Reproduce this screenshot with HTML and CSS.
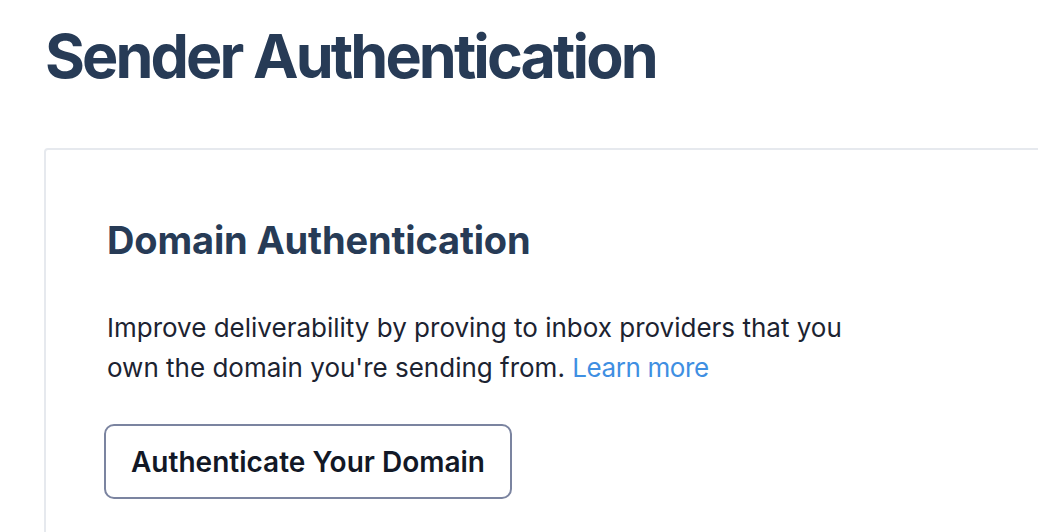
FILE: index.html
```html
<!DOCTYPE html>
<html lang="en">
<head>
<meta charset="utf-8">
<title>Sender Authentication</title>
<link rel="stylesheet" href="styles.css">
</head>
<body>
<main class="page">
  <h1 class="page-title">Sender Authentication</h1>
  <section class="card">
    <h2 class="card-title">Domain Authentication</h2>
    <p class="card-text">Improve deliverability by proving to inbox providers that you own the domain you're sending from. <a class="link" href="#">Learn more</a></p>
    <button class="btn" type="button">Authenticate Your Domain</button>
  </section>
</main>
</body>
</html>
```

FILE: styles.css
```css
html, body {
  margin: 0;
  padding: 0;
  background: #ffffff;
  overflow: hidden;
}
body {
  font-family: Inter, "Noto Sans", sans-serif;
}
.page {
  padding: 18px 0 0 44px;
  width: 1100px;
}
.page-title {
  margin: 0;
  font-size: 61px;
  line-height: 76px;
  font-weight: 700;
  color: #273b56;
  letter-spacing: -2.9px;
  padding-left: 1px;
}
.card {
  margin-top: 54px;
  border: 2px solid #e6e9ee;
  border-radius: 4px;
  padding: 66px 0 40px 61px;
}
.card-title {
  margin: 0;
  font-size: 38px;
  line-height: 48px;
  font-weight: 700;
  color: #273b56;
  letter-spacing: -0.15px;
}
.card-text {
  margin: 44px 0 0 0;
  max-width: 760px;
  font-size: 26px;
  line-height: 40px;
  color: #1c2331;
}
.link {
  color: #3f8fe2;
  text-decoration: none;
  letter-spacing: -0.4px;
}
.btn {
  margin-top: 36px;
  display: inline-block;
  font-family: Inter, "Noto Sans", sans-serif;
  font-size: 28px;
  font-weight: 600;
  color: #121826;
  background: #ffffff;
  border: 2px solid #7b84a0;
  border-radius: 10px;
  padding: 0 25px;
  height: 75px;
  margin-left: -3px;
}
```
